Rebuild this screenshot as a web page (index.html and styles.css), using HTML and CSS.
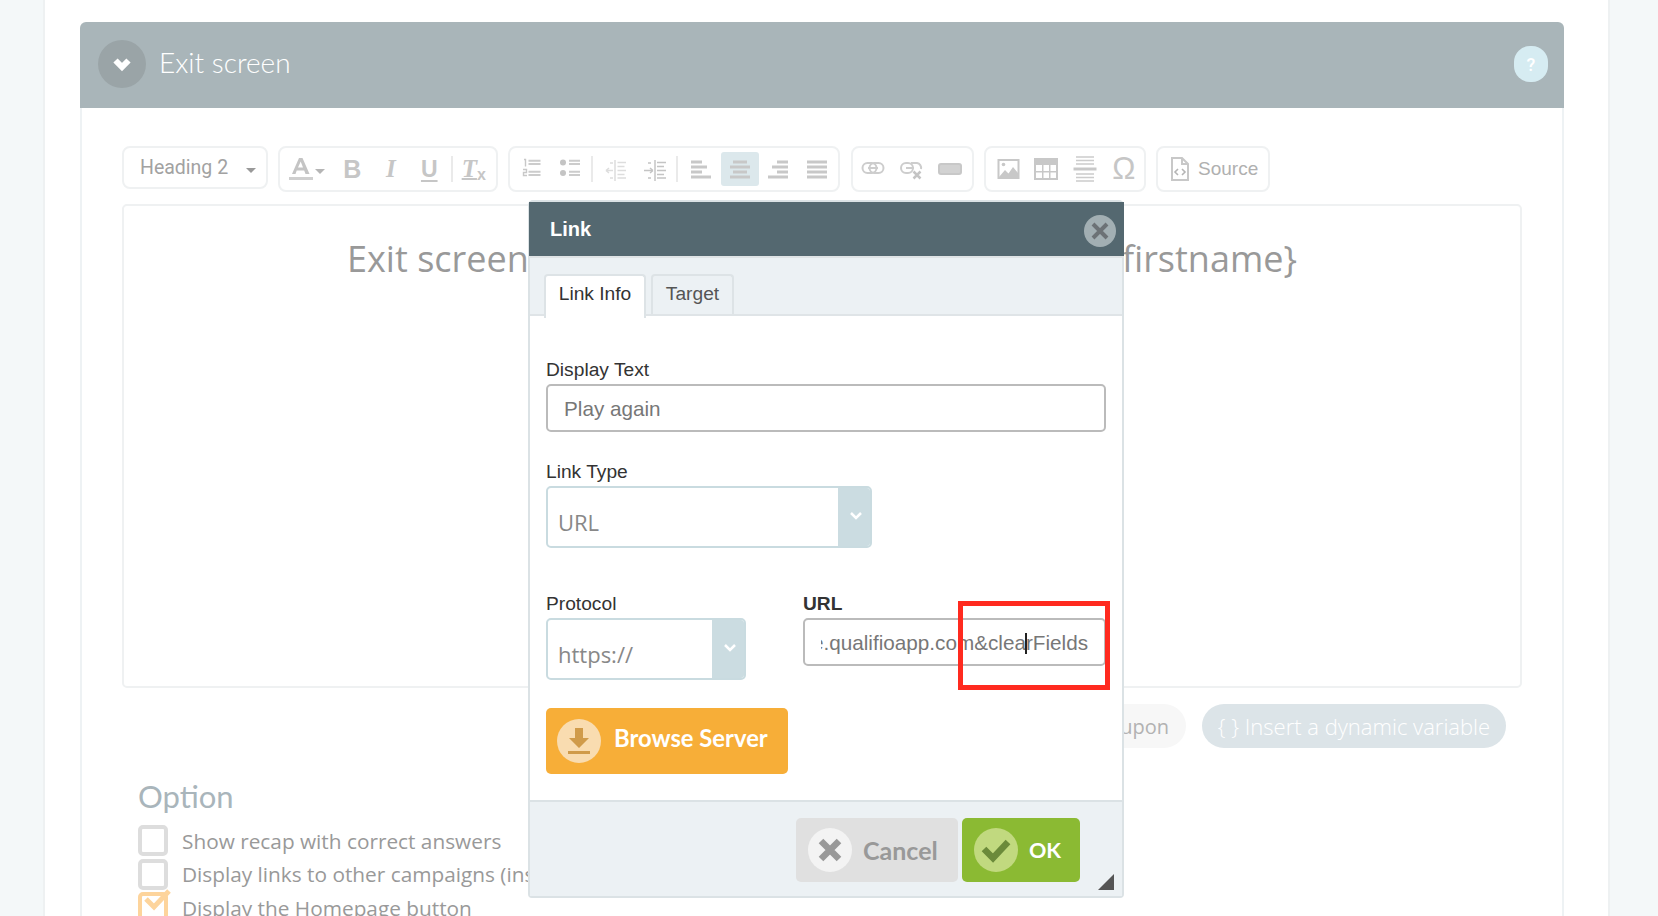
FILE: index.html
```html
<!DOCTYPE html>
<html lang="en">
<head>
<meta charset="utf-8">
<title>Exit screen</title>
<link rel="stylesheet" href="styles.css">
</head>
<body>
<div class="page">
  <main class="sheet">
    <section class="panel">
      <header class="panel-head">
        <span class="toggle"><svg width="24" height="20" viewBox="0 0 24 20"><path d="M5.500 6.500L12 13l6.500-6.500" fill="none" stroke="#fff" stroke-width="6"/></svg></span>
        <h2 class="panel-title">Exit screen</h2>
        <span class="help">?</span>
      </header>
      <div class="panel-body">
        <div class="toolbar">
          <div class="tb-group g-format"><span class="format-name">Heading 2</span><span class="caret"></span></div>
          <div class="tb-group g-text">
            <span class="cell cell-color"><svg width="51" height="26" viewBox="0 0 51 26"><path d="M10 18L17 2h3.500l7 16h-4l-1.300-3.500h-7.500L13.500 18zM16 11.500h5L18.700 5.500z" fill="#c4c4c4"/><rect x="7" y="21" width="24" height="3" fill="#cfcfcf"/><path d="M33 13h10l-5 5z" fill="#b5b5b5"/></svg></span>
            <span class="cell glyph g-b">B</span>
            <span class="cell glyph g-i">I</span>
            <span class="cell glyph g-u">U</span>
            <span class="sep"></span>
            <span class="cell glyph g-i g-t"><span class="t-mark">T</span><small>x</small></span>
          </div>
          <div class="tb-group g-para">
            <span class="cell"><svg width="26" height="26" viewBox="0 0 26 26"><path d="M10.500 4.700h12M10.500 8h12M10.500 15.700h12M10.500 19h12" stroke="#ccc" stroke-width="2"/><path d="M6 3.500h1.500v7M5 13.500h3.500v3h-3v3h3.500" fill="none" stroke="#c8c8c8" stroke-width="1.400"/></svg></span>
            <span class="cell"><svg width="26" height="26" viewBox="0 0 26 26"><circle cx="6" cy="6.500" r="3" fill="#c4c4c4"/><circle cx="6" cy="17" r="3" fill="#c4c4c4"/><path d="M12 4.700h11M12 8h11M12 15.700h11M12 19h11" stroke="#ccc" stroke-width="2"/></svg></span>
            <span class="sep"></span>
            <span class="cell"><svg width="26" height="26" viewBox="0 0 26 26"><path d="M12 4v21" stroke="#ddd" stroke-width="1.500"/><path d="M14.500 6.500H23M14.500 10.500h7M14.500 14.500H23M14.500 18.500h7M14.500 22H23M3 14.500h7M3 14.500l3-2.500M3 14.500l3 2.500M7 7h3M7 22h3" fill="none" stroke="#ddd" stroke-width="1.500"/></svg></span>
            <span class="cell"><svg width="26" height="26" viewBox="0 0 26 26"><path d="M13 4v21" stroke="#c4c4c4" stroke-width="1.500"/><path d="M15 6.500h9M15 10.500h7M15 14.500h9M15 18.500h7M15 22h9M2 14.500h9M11 14.500l-3-2.500M11 14.500l-3 2.500M6 7h3M6 22h3" fill="none" stroke="#c4c4c4" stroke-width="1.500"/></svg></span>
            <span class="sep"></span>
            <span class="cell"><svg width="26" height="26" viewBox="0 0 26 26"><path d="M3 6h11M3 11h16M3 16h11M3 21h20" stroke="#c8c8c8" stroke-width="3"/></svg></span>
            <span class="cell cell-on"><svg width="26" height="26" viewBox="0 0 26 26"><path d="M6 6h14M3 11h20M6 16h14M3 21h20" stroke="#c8c8c8" stroke-width="3"/></svg></span>
            <span class="cell"><svg width="26" height="26" viewBox="0 0 26 26"><path d="M12 6h11M7 11h16M12 16h11M3 21h20" stroke="#c8c8c8" stroke-width="3"/></svg></span>
            <span class="cell"><svg width="26" height="26" viewBox="0 0 26 26"><path d="M3 6h20M3 11h20M3 16h20M3 21h20" stroke="#c8c8c8" stroke-width="3"/></svg></span>
          </div>
          <div class="tb-group g-link">
            <span class="cell"><svg width="26" height="26" viewBox="0 0 26 26"><rect x="2.500" y="7" width="14" height="10" rx="5" fill="none" stroke="#cdcdcd" stroke-width="2"/><rect x="9.500" y="7" width="14" height="10" rx="5" fill="none" stroke="#cdcdcd" stroke-width="2"/><path d="M8 12h10" stroke="#cdcdcd" stroke-width="2"/></svg></span>
            <span class="cell"><svg width="26" height="26" viewBox="0 0 26 26"><rect x="3" y="7" width="12" height="10" rx="5" fill="none" stroke="#cdcdcd" stroke-width="2"/><path d="M13 7h6a5 5 0 0 1 4 6M8 12h8" fill="none" stroke="#cdcdcd" stroke-width="2"/><path d="M15.500 15.500l7 7M22.500 15.500l-7 7" stroke="#c4c4c4" stroke-width="2.500"/></svg></span>
            <span class="cell"><svg width="26" height="26" viewBox="0 0 26 26"><rect x="1" y="7" width="24" height="12" rx="3" fill="#c8c8c8"/><rect x="3" y="9" width="20" height="8" rx="1" fill="#d2d2d2"/></svg></span>
          </div>
          <div class="tb-group g-insert">
            <span class="cell"><svg width="26" height="26" viewBox="0 0 26 26"><rect x="3.500" y="4" width="20" height="18" fill="none" stroke="#c8c8c8" stroke-width="2"/><path d="M4 21l6-7 3.500 3.500L18 11l5 6v5H4z" fill="#c8c8c8"/><circle cx="8.500" cy="8.500" r="1.800" fill="#c8c8c8"/></svg></span>
            <span class="cell"><svg width="26" height="26" viewBox="0 0 26 26"><rect x="1" y="2" width="24" height="22" fill="#c8c8c8"/><path d="M3 9h6v6H3zM10.500 9h5.500v6h-5.500zM17.500 9H23v6h-5.500zM3 16.500h6V22H3zM10.500 16.500h5.500V22h-5.500zM17.500 16.500H23V22h-5.500z" fill="#fff"/></svg></span>
            <span class="cell"><svg width="26" height="26" viewBox="0 0 26 26"><path d="M4 1h18M4 4.500h18M4 8h18M4 18h18M4 21.500h18M4 25h18" stroke="#ccc" stroke-width="1.500"/><path d="M1.500 13h23" stroke="#c8c8c8" stroke-width="3"/></svg></span>
            <span class="cell glyph g-omega">Ω</span>
          </div>
          <div class="tb-group g-source">
            <svg width="20" height="24" viewBox="0 0 20 24"><path d="M2 1h10l6 6v16H2z M12 1v6h6" fill="none" stroke="#c8c8c8" stroke-width="2"/><path d="M8 12l-3 3 3 3M12 12l3 3-3 3" fill="none" stroke="#b5b5b5" stroke-width="1.600"/></svg>
            <span class="source-label">Source</span>
          </div>
        </div>
        <div class="editor">
          <h2 class="editor-heading">Exit screen — thank you so much for playing, {firstname}</h2>
        </div>
        <div class="editor-actions">
          <button class="pill pill-coupon" type="button">Insert a coupon</button>
          <button class="pill pill-var" type="button">{ } Insert a dynamic variable</button>
        </div>
        <h3 class="option-title">Option</h3>
        <ul class="options">
          <li class="option"><span class="check"></span>Show recap with correct answers</li>
          <li class="option"><span class="check"></span>Display links to other campaigns (instant win)</li>
          <li class="option"><span class="check check-on"><svg width="34" height="30" viewBox="0 0 34 30"><path d="M6 11l8 8L29 3" fill="none" stroke="#fdd49c" stroke-width="5"/></svg></span>Display the Homepage button</li>
        </ul>
      </div>
    </section>
  </main>
</div>

<div class="dialog" role="dialog">
  <div class="dialog-head">
    <span class="dialog-title">Link</span>
    <span class="dialog-close"><svg width="20" height="20" viewBox="0 0 20 20"><path d="M3 3l14 14M17 3L3 17" stroke="#6c7276" stroke-width="4"/></svg></span>
  </div>
  <div class="tabs">
    <span class="tab tab-on">Link Info</span>
    <span class="tab">Target</span>
  </div>
  <div class="dialog-body">
    <label class="field-label">Display Text</label>
    <div class="input input-full">Play again</div>
    <label class="field-label label-type">Link Type</label>
    <div class="select select-type"><span class="select-value">URL</span><span class="select-arrow"><svg width="14" height="10" viewBox="0 0 14 10"><path d="M2 2l5 5 5-5" fill="none" stroke="#fff" stroke-width="2.500"/></svg></span></div>
    <div class="url-row">
      <div class="col-protocol">
        <label class="field-label">Protocol</label>
        <div class="select select-protocol"><span class="select-value">https://</span><span class="select-arrow"><svg width="14" height="10" viewBox="0 0 14 10"><path d="M2 2l5 5 5-5" fill="none" stroke="#fff" stroke-width="2.500"/></svg></span></div>
      </div>
      <div class="col-url">
        <label class="field-label field-strong">URL</label>
        <div class="input input-url"><div class="url-clip"><span class="url-text">https://game.qualifioapp.com&amp;clea<i class="caret-bar"></i>rFields</span></div></div>
      </div>
    </div>
    <button class="btn btn-browse" type="button">
      <span class="btn-icon icon-browse"><svg width="26" height="30" viewBox="0 0 26 30"><path d="M9 2h8v10h6L13 22 3 12h6z" fill="#d09b4a"/><rect x="2" y="25" width="22" height="3" fill="#d09b4a"/></svg></span>
      <span class="btn-label">Browse Server</span>
    </button>
  </div>
  <div class="dialog-foot">
    <button class="btn btn-cancel" type="button">
      <span class="btn-icon icon-cancel"><svg width="26" height="26" viewBox="0 0 26 26"><path d="M4 4l18 18M22 4L4 22" stroke="#999" stroke-width="6.500"/></svg></span>
      <span class="btn-label">Cancel</span>
    </button>
    <button class="btn btn-ok" type="button">
      <span class="btn-icon icon-ok"><svg width="30" height="26" viewBox="0 0 30 26"><path d="M3 12l9 9L27 5" fill="none" stroke="#6b8a3a" stroke-width="6.500"/></svg></span>
      <span class="btn-label">OK</span>
    </button>
    <span class="resize"></span>
  </div>
</div>
<div class="callout"></div>
</body>
</html>
```

FILE: styles.css
```css
* { box-sizing: border-box; }
html, body { margin: 0; padding: 0; }
body { height: 916px; overflow: hidden; font-family: "Open Sans", sans-serif; background: #f4f8f9; position: relative; }
h2, h3, ul { margin: 0; padding: 0; font-weight: 400; }
button { font-family: inherit; border: 0; padding: 0; }

.page { padding-left: 43px; }
.sheet { width: 1567px; height: 916px; background: #fff; border-left: 2px solid #eef1f2; border-right: 2px solid #eef1f2; padding: 22px 44px 0 35px; overflow: hidden; }
.panel { width: 1484px; }
.panel-head { height: 86px; background: #a9b5b9; border-radius: 6px 6px 0 0; display: flex; align-items: center; padding: 0 16px 2px 18px; }
.toggle { width: 48px; height: 48px; border-radius: 50%; background: #9aa4a7; display: flex; align-items: center; justify-content: center; }
.panel-title { font-family: Lato, sans-serif; font-weight: 300; font-size: 28px; line-height: 34px; color: #fff; margin: 0 0 5px 13px; flex: 1; }
.help { width: 34px; height: 36px; border-radius: 16px; background: #d6ecf2; color: #fff; font-family: Roboto, sans-serif; font-size: 18px; font-weight: 500; display: flex; align-items: center; justify-content: center; }

.panel-body { border-left: 2px solid #eef2f4; border-right: 2px solid #eef2f4; padding: 38px 40px 0 40px; }
.toolbar { display: flex; gap: 10.5px; align-items: flex-start; }
.tb-group { height: 46px; border: 2px solid #eff1f2; border-radius: 8px; display: flex; align-items: center; padding-left: 2px; background: #fff; color: #c6c6c6; }
.g-format { width: 145.5px; height: 43px; padding-left: 16px; }
.g-text { width: 219.5px; }
.g-para { width: 332px; }
.g-link { width: 123px; padding-left: 1px; }
.g-insert { width: 161.5px; padding-left: 2.500px; }
.g-source { width: 114px; padding-left: 12px; gap: 8px; }
.format-name { font-family: Roboto, sans-serif; font-size: 19.500px; color: #a2a2a2; }
.caret { width: 0; height: 0; margin-left: 18px; margin-top: 5px; border-left: 5px solid transparent; border-right: 5px solid transparent; border-top: 5px solid #999; }
.source-label { font-family: "Liberation Sans", sans-serif; font-size: 19px; color: #b0b0b0; }

.cell { width: 38.5px; height: 34px; display: flex; align-items: center; justify-content: center; border-radius: 3px; flex: none; }
.cell-color { width: 51px; }
.cell-on { background: #dce8ec; }
.sep { width: 8px; height: 26px; flex: none; position: relative; }
.sep::before { content: ""; display: block; width: 2px; height: 26px; margin-left: 2px; background: #eaeaea; }
.glyph { font-size: 25px; line-height: 34px; }
.g-b { font-family: "Liberation Sans", sans-serif; font-weight: 700; }
.g-i { font-family: "Liberation Serif", serif; font-weight: 700; font-style: italic; }
.g-u { font-family: "Liberation Sans", sans-serif; font-weight: 700; font-size: 23px; text-decoration: underline; text-underline-offset: 3px; }
.g-t { align-items: flex-start; padding-right: 4px; }
.t-mark { text-decoration: underline; text-decoration-thickness: 2px; text-underline-offset: 1px; }
.g-t small { font-family: "Liberation Sans", sans-serif; font-style: normal; font-size: 16px; line-height: 16px; margin-top: 15px; }
.g-omega { font-family: "Liberation Sans", sans-serif; font-size: 31px; font-weight: 400; padding-left: 1px; }

.editor { height: 484px; margin-top: 12px; border: 2px solid #eff1f2; border-radius: 5px; padding-top: 29px; }
.editor-heading { font-size: 36px; line-height: 48px; color: #999; text-align: center; white-space: nowrap; }
.editor-actions { display: flex; justify-content: flex-end; gap: 16px; margin-top: 16px; padding-right: 16px; }
.pill { height: 44px; border-radius: 22px; font-size: 20px; padding: 0 17px; }
.pill-coupon { background: #f7f7f7; color: #b2b2b2; width: 236px; text-align: right; }
.pill-var { background: #dce4e8; color: #fff; font-weight: 300; font-size: 22px; width: 304px; text-align: center; padding: 0; }

.option-title { font-family: Lato, sans-serif; font-size: 31px; line-height: 36px; color: #a9b5bb; margin: 30px 0 10px 16px; }
.options { list-style: none; margin-left: 16px; }
.option { display: flex; align-items: center; height: 33.500px; font-size: 20.800px; color: #999; white-space: nowrap; }
.check { width: 30px; height: 31px; border: 4px solid #ddd; border-radius: 5px; margin-right: 14px; position: relative; flex: none; }
.check-on { border-color: #fdd49c; }
.check-on svg { position: absolute; left: -2px; top: -8px; }

.dialog { position: absolute; left: 528px; top: 200px; width: 596px; height: 698px; border: 2px solid #dbe2e5; border-radius: 5px 5px 4px 4px; background: #fff; display: flex; flex-direction: column; font-family: "Liberation Sans", sans-serif; }
.dialog-head { height: 56px; flex: none; margin: 0 -2px 0 -1px; background: #546870; border-bottom: 2px solid #dfe3e5; display: flex; align-items: center; justify-content: space-between; padding: 0 8px 0 21px; }
.dialog-title { font-size: 20px; font-weight: 700; color: #fff; }
.dialog-close { width: 32px; height: 32px; margin-top: 3px; border-radius: 50%; background: #a2afb3; display: flex; align-items: center; justify-content: center; }
.tabs { height: 58px; flex: none; background: #ecf1f4; border-bottom: 2px solid #dfe4e7; padding: 16px 0 0 14px; display: flex; gap: 5px; align-items: flex-start; }
.tab { height: 40px; width: 83px; border: 2px solid #dde3e6; border-bottom: 0; border-radius: 4px 4px 0 0; font-size: 19.200px; line-height: 36px; color: #555; text-align: center; }
.tab-on { width: 102px; height: 44px; background: #fff; color: #333; }

.dialog-body { flex: 1; padding: 43px 16px 0; }
.field-label { display: block; font-size: 19.200px; line-height: 22px; color: #333; }
.field-strong { font-weight: 700; }
.input { height: 48px; margin-top: 3px; border: 2px solid #bbb; border-radius: 5px; font-size: 20.700px; line-height: 44px; color: #777; }
.input-full { padding-left: 16px; padding-top: 1px; }
.label-type { margin-top: 29px; }
.select { height: 62px; margin-top: 3px; border: 2px solid #c9dbe0; border-radius: 5px; display: flex; overflow: hidden; font-family: "Open Sans", sans-serif; font-size: 22px; color: #888; }
.select-type { width: 326px; }
.select-value { flex: 1; padding: 18px 0 0 10px; line-height: 32px; }
.select-arrow { width: 32px; background: #cbdce1; display: flex; align-items: center; justify-content: center; padding: 0 0 2px 3px; }
.select-protocol { width: 200px; }
.url-row { display: flex; gap: 57px; margin-top: 45px; }
.col-url { width: 303px; }
.input-url { padding: 1px 16px 0 16px; }
.url-clip { display: flex; justify-content: flex-end; overflow: hidden; white-space: nowrap; }
.url-text { flex: none; }
.caret-bar { display: inline-block; width: 2px; height: 21px; margin: 0 -1px; background: #222; vertical-align: -4px; }

.btn { display: inline-flex; align-items: center; border-radius: 5px; font-family: Lato, sans-serif; font-weight: 700; font-size: 23.800px; }
.btn-icon { width: 44px; height: 44px; border-radius: 50%; display: flex; align-items: center; justify-content: center; flex: none; margin-right: 11px; }
.btn-browse { width: 242px; height: 66px; margin-top: 28px; padding-left: 11px; background: #f7ae38; color: #fff; }
.btn-browse .btn-label { margin: 0 0 6px 2px; }
.icon-browse { background: #f9dcb0; }
.dialog-foot { height: 96px; flex: none; background: #ecf1f4; border-top: 2px solid #dbe2e5; padding: 16px 42px 0 0; display: flex; justify-content: flex-end; align-items: flex-start; gap: 4px; position: relative; }
.btn-cancel { width: 162px; height: 64px; padding-left: 12px; background: #e0e0e0; color: #999; font-size: 25px; }
.icon-cancel { background: #f3f3f3; }
.btn-ok { width: 118px; height: 64px; padding-left: 12px; background: #8bba33; color: #fff; font-size: 21.500px; }
.icon-ok { background: #c1d97f; }
.resize { position: absolute; right: 8px; bottom: 6px; width: 0; height: 0; border-left: 16px solid transparent; border-bottom: 16px solid #555; }

.callout { position: absolute; left: 958px; top: 601px; width: 152px; height: 89px; border: 5px solid #ff2a1f; }
```
